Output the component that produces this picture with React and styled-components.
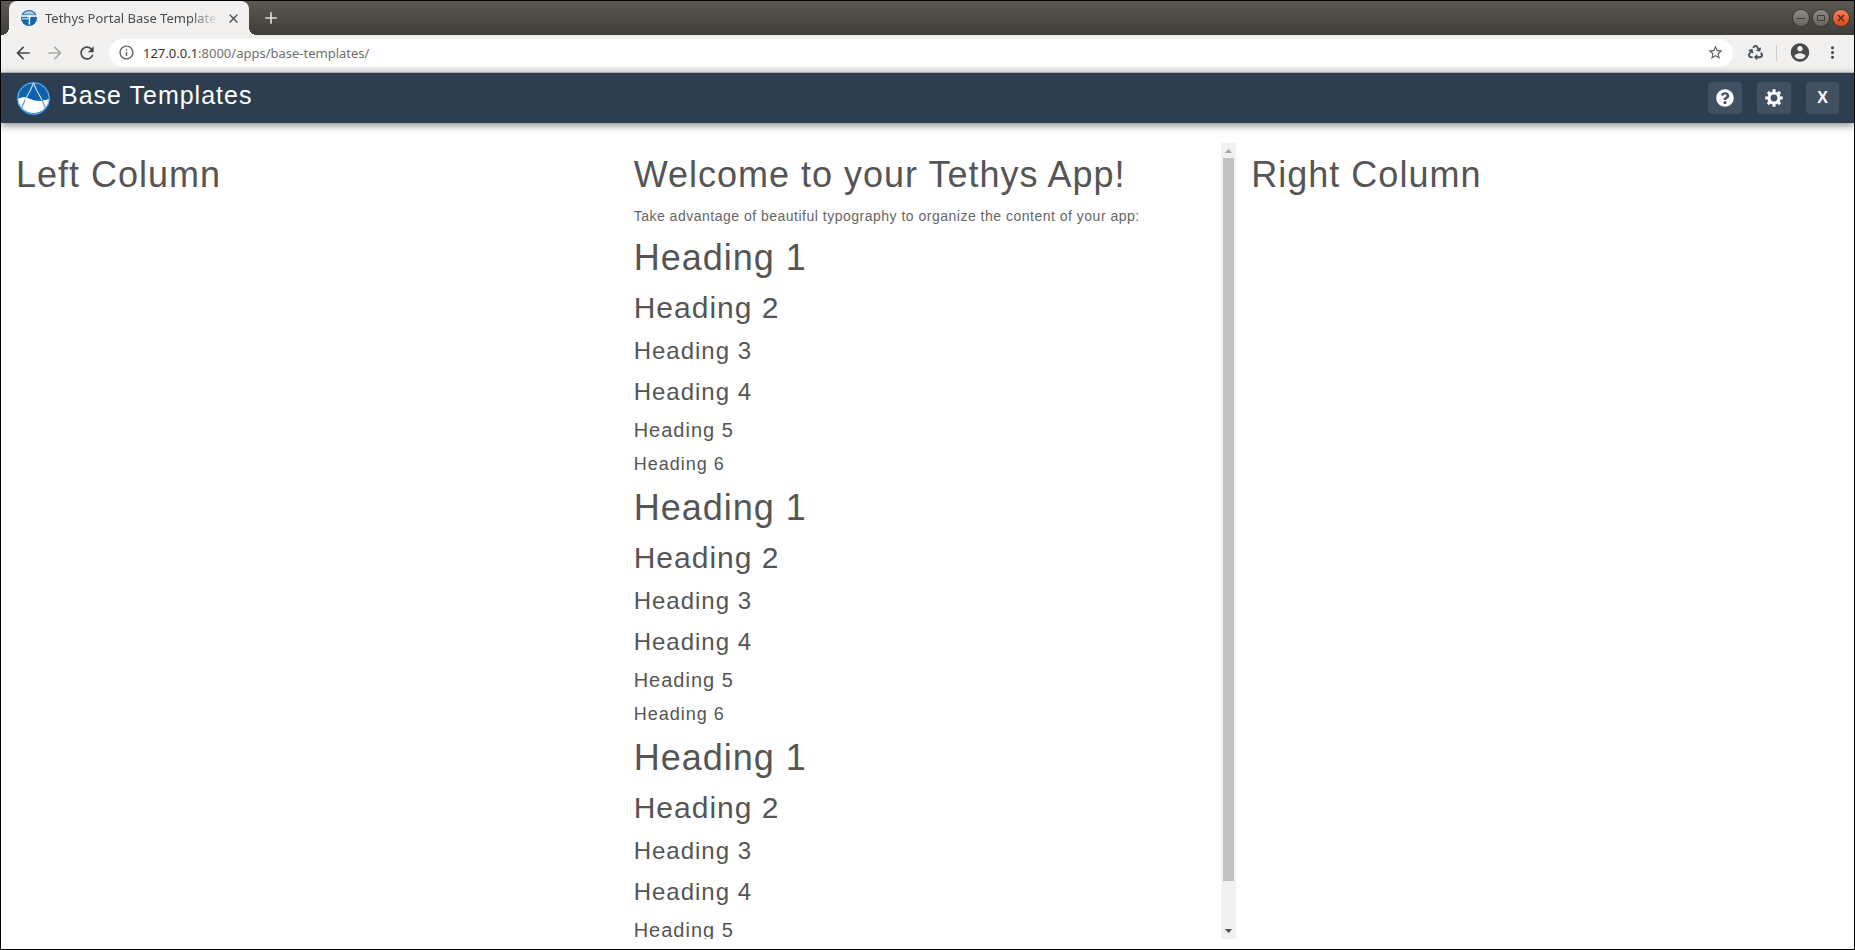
import React from "react";
import styled, { createGlobalStyle, css } from "styled-components";
import {
  MdArrowBack, MdArrowForward, MdRefresh, MdInfoOutline, MdStarBorder,
  MdMoreVert, MdClose, MdAdd,
} from "react-icons/md";
import { FaRecycle, FaQuestionCircle } from "react-icons/fa";

const Global = createGlobalStyle`
  *, *::before, *::after { box-sizing: border-box; }
  body { margin: 0; background: #fff; }
  button, input { font: inherit; color: inherit; }
`;

const Window = styled.div`
  display: flex;
  flex-direction: column;
  height: 100vh;
  border: 1px solid #000;
  overflow: hidden;
  font-family: "Liberation Sans", Arial, sans-serif;
`;

const TitleBar = styled.div`
  flex: none;
  display: flex;
  align-items: stretch;
  height: 34px;
  padding: 0 5px 0 8px;
  background: linear-gradient(#5b5950, #3f3d38);
`;

const Tab = styled.div`
  position: relative;
  display: flex;
  align-items: center;
  width: 240px;
  padding: 0 8px 0 12px;
  border-radius: 8px 8px 0 0;
  background: #f2f1f0;
  color: #4b4b4b;
  font: 13px/18px "Noto Sans", sans-serif;
  &::before, &::after {
    content: "";
    position: absolute;
    bottom: 0;
    width: 8px;
    height: 8px;
  }
  &::before {
    left: -8px;
    background: radial-gradient(circle at 0 0, transparent 8px, #f2f1f0 8px);
  }
  &::after {
    right: -8px;
    background: radial-gradient(circle at 100% 0, transparent 8px, #f2f1f0 8px);
  }
`;

const TabTitle = styled.span`
  flex: 1;
  margin: 0 6px 0 8px;
  overflow: hidden;
  white-space: nowrap;
  mask-image: linear-gradient(to right, #000 84%, transparent);
`;

const IconButton = styled.button`
  flex: none;
  display: flex;
  align-items: center;
  justify-content: center;
  width: ${(p) => p.$w || 20}px;
  padding: 0;
  border: 0;
  background: none;
  color: ${(p) => p.$color || "#46484a"};
`;

const WindowControls = styled.div`
  display: flex;
  align-items: center;
  gap: 4px;
  margin-left: auto;
`;

const Control = styled.button`
  display: flex;
  width: 16px;
  height: 16px;
  padding: 0;
  border: 0;
  border-radius: 50%;
  box-shadow: 0 0 0 1px #35342f;
  background: ${(p) => (p.$close ? "linear-gradient(#f5805c, #dd4814)" : "linear-gradient(#8b8a83, #66645d)")};
`;

const Toolbar = styled.div`
  flex: none;
  display: flex;
  align-items: center;
  height: 38px;
  padding: 0 1px 2px 12px;
  border-bottom: 1px solid #c9c8c7;
  background: #f2f1f0;
`;

const NavButtons = styled.div`
  display: flex;
  gap: 12px;
  margin-right: 12px;
`;

const AddressBar = styled.div`
  flex: 1;
  display: flex;
  align-items: center;
  height: 28px;
  padding: 0 8px 0 9px;
  border-radius: 14px;
  background: #fff;
  color: #5f6368;
`;

const Address = styled.div`
  flex: 1;
  margin-left: 8px;
  font: 13px/20px "Noto Sans", sans-serif;
  color: #707070;
  b { font-weight: 400; color: #333; }
`;

const Extras = styled.div`
  display: flex;
  align-items: center;
  margin-left: 12px;
`;

const Divider = styled.span`
  width: 1px;
  height: 16px;
  margin: 0 12px 0 11px;
  background: #cfcecd;
`;

const AppHeader = styled.header`
  flex: none;
  display: flex;
  height: 50px;
  padding: 0 15px;
  background: #2d3e50;
  color: #fff;
  box-shadow: 0 2px 8px rgba(0, 0, 0, 0.5);
`;

const Brand = styled.a`
  display: flex;
  align-items: flex-start;
  color: inherit;
  text-decoration: none;
  svg { margin-top: 8px; }
`;

const AppTitle = styled.span`
  margin-left: 10px;
  font-size: 25px;
  line-height: 44px;
  letter-spacing: 1px;
`;

const HeaderActions = styled.nav`
  display: flex;
  align-items: center;
  gap: 15px;
  margin-left: auto;
`;

const HeaderButton = styled.a`
  display: flex;
  align-items: center;
  justify-content: center;
  min-width: 33px;
  height: 32px;
  padding: 0 8px;
  border-radius: 4px;
  background: #425162;
  color: #fff;
  font-size: 16px;
  font-weight: 700;
  line-height: 20px;
  text-decoration: none;
`;

const Main = styled.main`
  flex: 1;
  min-height: 0;
  display: grid;
  grid-template-columns: repeat(3, minmax(0, 1fr));
  padding: 20px 0 10px;
`;

const Column = styled.section`
  display: flex;
  min-height: 0;
`;

const ColumnBody = styled.div`
  flex: 1;
  min-width: 0;
  padding: 12px 15px 0;
  overflow: auto;
  scrollbar-width: none;
`;

const sizes = {
  1: [36, 40], 2: [30, 33], 3: [24, 28], 4: [24, 28], 5: [20, 22], 6: [18, 21],
};

const Heading = styled.h1`
  margin: 0 0 13px;
  font-weight: 400;
  letter-spacing: 1px;
  color: #555;
  ${(p) => css`
    font-size: ${sizes[p.$level][0]}px;
    line-height: ${sizes[p.$level][1]}px;
  `}
`;

const Lead = styled.p`
  margin: 0 0 13px;
  font-size: 14px;
  line-height: 17px;
  letter-spacing: 0.5px;
  color: #666;
`;

const ScrollTrack = styled.div`
  flex: none;
  display: flex;
  flex-direction: column;
  align-items: center;
  width: 15px;
  background: #f1f1f1;
`;

const ScrollArrow = styled.svg`
  flex: none;
  width: 15px;
  height: 15px;
  fill: ${(p) => p.$color};
`;

const ScrollRail = styled.div`
  flex: 1;
  width: 11px;
`;

const ScrollThumb = styled.div`
  height: 94.4%;
  background: #c1c1c1;
`;

function Favicon() {
  return (
    <svg width="16" height="16" viewBox="0 0 16 16" aria-hidden="true">
      <circle cx="8" cy="8" r="8" fill="#1566b0" />
      <path d="M2 4.5A7 7 0 0 1 14 4.5Z" fill="#a9c9e6" />
      <path d="M0 6H16" stroke="#fff" strokeWidth="1.6" />
      <path d="M6 6.5h4M8.4 6.5v8" stroke="#fff" strokeWidth="1.5" />
      <path d="M1 8.8h6.5" stroke="#fff" strokeWidth="1" />
    </svg>
  );
}

function TethysLogo() {
  return (
    <svg width="35" height="35" viewBox="0 0 35 35" aria-hidden="true">
      <circle cx="17.5" cy="17.5" r="17" fill="#0d62ab" />
      <path d="M1.8 18C7 15 10 16 15 18.3C21 20.8 27 20 33.2 18A15.8 15.8 0 0 1 1.8 18Z" fill="#fff" />
      <circle cx="17.5" cy="17.5" r="15.7" fill="none" stroke="#a9c9e6" strokeWidth="0.8" />
      <path d="M17.5 2L14.5 9L9 19M17.5 2L20.5 9L26 19" fill="none" stroke="#c5dcef" strokeWidth="1.2" />
      <path d="M9 19L5.5 27M26 19L29.5 27" fill="none" stroke="#5f99cb" strokeWidth="1.2" />
    </svg>
  );
}

function ProfileIcon() {
  return (
    <svg width="23" height="23" viewBox="0 0 24 24" fill="currentColor" aria-hidden="true">
      <path d="M12 2C6.48 2 2 6.48 2 12s4.480 10 10 10 10-4.480 10-10S17.520 2 12 2zm0 3c1.660 0 3 1.340 3 3s-1.340 3-3 3-3-1.340-3-3 1.340-3 3-3zm0 14.200c-2.500 0-4.710-1.280-6-3.220.030-1.990 4-3.080 6-3.080 1.990 0 5.970 1.090 6 3.080-1.290 1.940-3.500 3.220-6 3.220z" />
    </svg>
  );
}

function GearIcon() {
  return (
    <svg width="18" height="18" viewBox="0 0 18 18" fill="none" stroke="currentColor" aria-hidden="true">
      <circle cx="9" cy="9" r="5" strokeWidth="3.2" />
      <path strokeWidth="3" d="M9 0.300V3M9 15V17.700M0.300 9H3M15 9H17.700M2.900 2.900L5 5M13 13L15.100 15.100M15.100 2.900L13 5M5 13L2.900 15.100" />
    </svg>
  );
}

const levels = [1, 2, 3, 4, 5, 6];

export default function App() {
  return (
    <>
      <Global />
      <Window>
        <TitleBar>
          <Tab>
            <Favicon />
            <TabTitle>Tethys Portal Base Templates</TabTitle>
            <IconButton $w={16} aria-label="Close tab"><MdClose size={15} /></IconButton>
          </Tab>
          <IconButton $w={44} $color="#dedcd8" aria-label="New tab"><MdAdd size={20} /></IconButton>
          <WindowControls>
            <Control aria-label="Minimize">
              <svg width="16" height="16" stroke="#3c3b37"><path d="M4 8.5H12" /></svg>
            </Control>
            <Control aria-label="Maximize">
              <svg width="16" height="16" fill="none" stroke="#3c3b37"><path d="M4.5 5.5H11.5V10.5H4.5Z" /></svg>
            </Control>
            <Control $close aria-label="Close">
              <svg width="16" height="16" stroke="#4a2415" strokeWidth="1.3"><path d="M5 5L11 11M11 5L5 11" /></svg>
            </Control>
          </WindowControls>
        </TitleBar>
        <Toolbar>
          <NavButtons>
            <IconButton aria-label="Back"><MdArrowBack size={20} /></IconButton>
            <IconButton $color="#a9a9a8" aria-label="Forward"><MdArrowForward size={20} /></IconButton>
            <IconButton aria-label="Reload"><MdRefresh size={20} /></IconButton>
          </NavButtons>
          <AddressBar>
            <MdInfoOutline size={17} />
            <Address><b>127.0.0.1</b>:8000/apps/base-templates/</Address>
            <IconButton $color="#606060" aria-label="Bookmark"><MdStarBorder size={17} /></IconButton>
          </AddressBar>
          <Extras>
            <IconButton $color="#46525e" aria-label="Extension"><FaRecycle size={15} /></IconButton>
            <Divider />
            <IconButton $w={22} aria-label="Profile"><ProfileIcon /></IconButton>
            <IconButton $w={42} aria-label="Menu"><MdMoreVert size={19} /></IconButton>
          </Extras>
        </Toolbar>
        <AppHeader>
          <Brand href="#home">
            <TethysLogo />
            <AppTitle>Base Templates</AppTitle>
          </Brand>
          <HeaderActions>
            <HeaderButton href="#help" aria-label="Help"><FaQuestionCircle size={18} /></HeaderButton>
            <HeaderButton href="#settings" aria-label="Settings"><GearIcon /></HeaderButton>
            <HeaderButton href="#exit">X</HeaderButton>
          </HeaderActions>
        </AppHeader>
        <Main>
          <Column>
            <ColumnBody><Heading $level={1}>Left Column</Heading></ColumnBody>
          </Column>
          <Column>
            <ColumnBody>
              <Heading $level={1}>Welcome to your Tethys App!</Heading>
              <Lead>Take advantage of beautiful typography to organize the content of your app:</Lead>
              {[0, 1, 2].map((group) =>
                levels.map((n) => (
                  <Heading key={`${group}-${n}`} as={`h${n}`} $level={n}>Heading {n}</Heading>
                ))
              )}
            </ColumnBody>
            <ScrollTrack>
              <ScrollArrow viewBox="0 0 15 15" $color="#a3a3a3"><path d="M4 10L7.5 6L11 10Z" /></ScrollArrow>
              <ScrollRail><ScrollThumb /></ScrollRail>
              <ScrollArrow viewBox="0 0 15 15" $color="#505050"><path d="M4 5L7.5 9L11 5Z" /></ScrollArrow>
            </ScrollTrack>
          </Column>
          <Column>
            <ColumnBody><Heading $level={1}>Right Column</Heading></ColumnBody>
          </Column>
        </Main>
      </Window>
    </>
  );
}
